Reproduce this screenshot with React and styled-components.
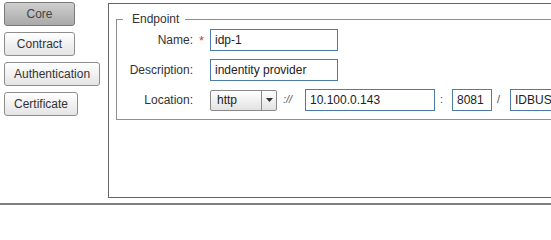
import React from 'react'
import styled, { createGlobalStyle } from 'styled-components'

const GlobalStyle = createGlobalStyle`
  html, body {
    margin: 0;
    padding: 0;
    background: #ffffff;
    overflow: hidden;
  }
  body {
    font-family: "Liberation Sans", Arial, sans-serif;
    font-size: 12px;
    color: #333;
  }
`

const Page = styled.div`
  width: 551px;
  height: 205px;
  display: flex;
  flex-direction: column;
  overflow: hidden;
`

const Main = styled.div`
  display: flex;
  flex-direction: row;
  height: 198px;
`

const Sidebar = styled.div`
  width: 104px;
  flex: none;
  display: flex;
  flex-direction: column;
  align-items: flex-start;
  gap: 6px;
  padding: 2px 0 0 4px;
`

const TabButton = styled.button`
  height: 24px;
  min-width: 71px;
  padding: 0 9px;
  box-sizing: border-box;
  font-family: "Liberation Sans", Arial, sans-serif;
  font-size: 12px;
  color: ${p => (p.$active ? '#444' : '#333')};
  border: 1px solid ${p => (p.$active ? '#7a7a7a' : '#8e8e8e')};
  border-radius: 3px;
  background: ${p =>
    p.$active
      ? 'linear-gradient(#cfcfcf, #a9a9a9)'
      : 'linear-gradient(#ffffff, #e4e4e4)'};
  cursor: pointer;
  outline: none;
`

const Panel = styled.div`
  flex: none;
  width: 700px;
  margin-top: 3px;
  box-sizing: border-box;
  border: 1px solid #666;
  border-right: none;
  padding: 8px 0 0 7px;
`

const Fieldset = styled.fieldset`
  margin: 0;
  width: 700px;
  box-sizing: border-box;
  border: 1px solid #8f8f8f;
  padding: 3px 0 8px 0;
  display: flex;
  flex-direction: column;
  gap: 8px;
`

const Legend = styled.legend`
  margin-left: 6px;
  padding: 0 6px 0 9px;
  font-size: 12px;
  line-height: 14px;
  color: #333;
`

const Row = styled.div`
  display: flex;
  align-items: center;
  height: 22px;
`

const Label = styled.div`
  width: 76px;
  flex: none;
  text-align: right;
  color: #333;
`

const Marker = styled.div`
  width: 17px;
  flex: none;
  text-align: center;
  color: #d63a3a;
  font-size: 13px;
  line-height: 12px;
  padding-top: 2px;
`

const TextInput = styled.input`
  width: ${p => p.$w}px;
  height: 22px;
  flex: none;
  box-sizing: border-box;
  border: 1px solid #4d7ca6;
  padding: 0 4px;
  font-family: "Liberation Sans", Arial, sans-serif;
  font-size: 12px;
  color: #222;
  background: #fff;
  outline: none;
`

const Select = styled.div`
  width: 67px;
  height: 21px;
  flex: none;
  box-sizing: border-box;
  display: flex;
  border: 1px solid #8a8a8a;
  border-radius: 2px;
  background: linear-gradient(#ffffff, #e2e2e2);
`

const SelectText = styled.div`
  flex: 1;
  padding-left: 6px;
  line-height: 19px;
  color: #222;
`

const SelectArrow = styled.div`
  width: 14px;
  flex: none;
  border-left: 1px solid #8a8a8a;
  display: flex;
  align-items: center;
  justify-content: center;
`

const Sep = styled.div`
  width: ${p => p.$w}px;
  flex: none;
  align-self: flex-start;
  padding-left: ${p => p.$pad}px;
  box-sizing: border-box;
  font-size: 11px;
  line-height: 12px;
  padding-top: 4px;
  color: #555;
  font-style: ${p => (p.$italic ? 'italic' : 'normal')};
`

const BottomRule = styled.div`
  margin-top: 5px;
  height: 2px;
  background: #7f7f7f;
`

const tabs = ['Core', 'Contract', 'Authentication', 'Certificate']

export default function App() {
  return (
    <Page>
      <GlobalStyle />
      <Main>
        <Sidebar>
          {tabs.map(t => (
            <TabButton key={t} $active={t === 'Core'}>{t}</TabButton>
          ))}
        </Sidebar>
        <Panel>
          <Fieldset>
            <Legend>Endpoint</Legend>
            <Row>
              <Label>Name:</Label>
              <Marker>*</Marker>
              <TextInput $w={128} defaultValue="idp-1" />
            </Row>
            <Row>
              <Label>Description:</Label>
              <Marker />
              <TextInput $w={128} defaultValue="indentity provider" />
            </Row>
            <Row>
              <Label>Location:</Label>
              <Marker />
              <Select>
                <SelectText>http</SelectText>
                <SelectArrow>
                  <svg width="7" height="4" viewBox="0 0 7 4">
                    <path d="M0 0 L7 0 L3.5 4 Z" fill="#333" />
                  </svg>
                </SelectArrow>
              </Select>
              <Sep $w={28} $pad={6} $italic>://</Sep>
              <TextInput $w={130} defaultValue="10.100.0.143" />
              <Sep $w={17} $pad={5}>:</Sep>
              <TextInput $w={40} defaultValue="8081" />
              <Sep $w={18} $pad={5}>/</Sep>
              <TextInput $w={90} defaultValue="IDBUS" />
            </Row>
          </Fieldset>
        </Panel>
      </Main>
      <BottomRule />
    </Page>
  )
}
